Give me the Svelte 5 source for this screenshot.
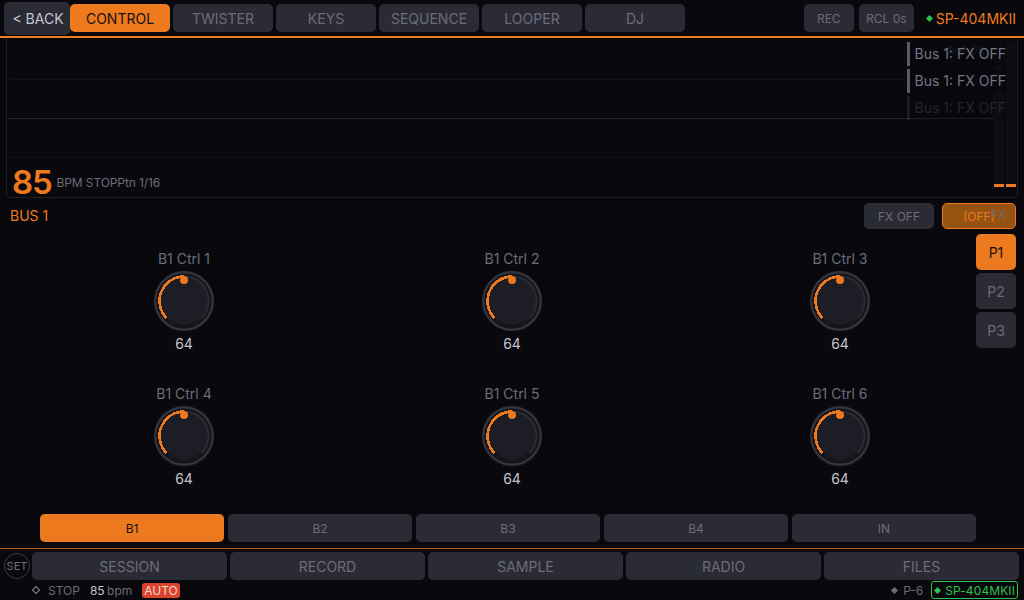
<script lang="ts">
  const tabs = ["CONTROL", "TWISTER", "KEYS", "SEQUENCE", "LOOPER", "DJ"];
  const knobs = [1, 2, 3, 4, 5, 6].map((n) => ({ label: `B1 Ctrl ${n}`, value: 64 }));
  const pages = ["P1", "P2", "P3"];
  const buses = ["B1", "B2", "B3", "B4", "IN"];
  const nav = ["SESSION", "RECORD", "SAMPLE", "RADIO", "FILES"];
  const toasts = [1, 1, 0.25];
</script>

<div class="screen">
  <header class="topbar">
    <button class="btn back">&lt; BACK</button>
    <div class="tabs">
      {#each tabs as tab, i}
        <button class="btn tab" class:on={i === 0}>{tab}</button>
      {/each}
    </div>
    <div class="top-right">
      <button class="btn small rec">REC</button>
      <button class="btn small rcl">RCL 0s</button>
      <span class="device"><i class="dot"></i>SP-404MKII</span>
    </div>
  </header>

  <section class="viz">
    <div class="grid-lines">
      <span></span>
      <span class="mid"></span>
      <span></span>
    </div>
    <div class="readout">
      <span class="bpm">85</span>
      <span class="meta">BPM STOP</span><span class="meta">Ptn 1/16</span>
    </div>
    <span class="buf">buf 0s</span>
    <div class="meters">
      <div class="meter"><b></b></div>
      <div class="meter"><b></b></div>
    </div>
    <div class="toasts">
      {#each toasts as alpha}
        <div class="toast" style="opacity: {alpha}">Bus 1: FX OFF</div>
      {/each}
    </div>
  </section>

  <section class="bus-head">
    <span class="bus-name">BUS 1</span>
    <div class="fx">
      <button class="btn fx-off">FX OFF</button>
      <button class="btn fx-state">(OFF)<span class="fx-tag">FX</span></button>
    </div>
  </section>

  <section class="body">
    <div class="knobs">
      {#each knobs as knob}
        <div class="knob">
          <span class="knob-label">{knob.label}</span>
          <svg width="60" height="60" viewBox="0 0 60 60">
            <circle cx="30" cy="30" r="28.8" fill="#15151b" stroke="#33333e" stroke-width="2.4" />
            <circle cx="30" cy="30" r="23.5" fill="#1d1d25" />
            <path d="M30 5.5A24.5 24.5 0 0 1 47.3 47.3" fill="none" stroke="#2b2b34" stroke-width="2" />
            <path d="M12.7 47.3A24.5 24.5 0 0 1 30 5.5" fill="none" stroke="#ee7a20" stroke-width="2.6" shape-rendering="crispEdges" />
            <circle cx="30" cy="9" r="4" fill="#ee7a20" />
          </svg>
          <span class="knob-value">{knob.value}</span>
        </div>
      {/each}
    </div>
    <div class="pages">
      {#each pages as page, i}
        <button class="btn page" class:on={i === 0}>{page}</button>
      {/each}
    </div>
  </section>

  <div class="bus-tabs">
    {#each buses as bus, i}
      <button class="btn bus" class:on={i === 0}>{bus}</button>
    {/each}
  </div>

  <nav class="nav">
    <span class="set">SET</span>
    {#each nav as item}
      <button class="btn nav-item">{item}</button>
    {/each}
  </nav>

  <footer class="status">
    <i class="diamond"></i>
    <span class="stop">STOP</span>
    <span class="tempo"><b>85</b> bpm</span>
    <span class="auto">AUTO</span>
    <span class="spacer"></span>
    <i class="port-dot"></i>
    <span class="port">P-6</span>
    <span class="link"><i></i>SP-404MKII</span>
  </footer>
</div>

<style>
  :global(body) {
    margin: 0;
    background: #08080d;
  }

  .screen {
    width: 1024px;
    height: 600px;
    overflow: hidden;
    display: flex;
    flex-direction: column;
    background: #08080d;
    color: #6c6c7a;
    font-family: Inter, "Liberation Sans", sans-serif;
  }

  .btn {
    border: 0;
    padding: 0;
    margin: 0;
    background: #2b2b36;
    color: #6c6c7a;
    font: inherit;
    border-radius: 5px;
  }

  .btn.on {
    background: #ee7a20;
    color: #17110c;
  }

  .topbar {
    height: 36px;
    flex: none;
    display: flex;
    align-items: center;
    padding-left: 4px;
    padding-right: 8px;
    border-bottom: 2px solid #ee7a20;
  }

  .back {
    width: 66px;
    height: 33px;
    padding-left: 2px;
    color: #c5c5cf;
    font-size: 14px;
  }

  .tabs {
    display: flex;
    gap: 3px;
  }

  .tab {
    width: 100px;
    height: 28px;
    font-size: 14px;
  }

  .top-right {
    margin-left: auto;
    display: flex;
    align-items: center;
    gap: 5px;
  }

  .small {
    height: 28px;
    font-size: 12px;
  }

  .rec {
    width: 50px;
  }

  .rcl {
    width: 55px;
  }

  .device {
    margin-left: 8px;
    display: flex;
    align-items: center;
    gap: 4px;
    color: #ee7a20;
    font-size: 14px;
  }

  .dot {
    width: 5px;
    height: 5px;
    background: #2ec24a;
    transform: rotate(45deg);
  }

  .viz {
    position: relative;
    flex: none;
    height: 159px;
    margin: 1px 6px 0;
    border: 1px solid #1e1e26;
    border-top: 0;
    border-radius: 0 0 4px 4px;
    box-sizing: border-box;
  }

  .grid-lines {
    position: absolute;
    left: 2px;
    right: 22px;
    top: 40px;
    display: flex;
    flex-direction: column;
    gap: 38px;
  }

  .grid-lines span {
    height: 1px;
    background: #101016;
  }

  .grid-lines span.mid {
    background: #24242c;
  }

  .readout {
    position: absolute;
    left: 5px;
    bottom: -5px;
    display: flex;
    align-items: center;
  }

  .bpm {
    color: #ee7a20;
    font-size: 33px;
    font-weight: 600;
    line-height: 40px;
    letter-spacing: -1.2px;
    margin-right: 5px;
  }

  .meta {
    font-size: 12px;
    letter-spacing: -0.1px;
  }

  .buf {
    position: absolute;
    right: 33px;
    top: 3px;
    font-size: 12px;
    color: #2f2f39;
  }

  .meters {
    position: absolute;
    right: 1px;
    top: 4px;
    bottom: 10px;
    display: flex;
    gap: 2px;
  }

  .meter {
    position: relative;
    width: 10px;
    background-color: #0d0d13;
    background-image: radial-gradient(#24242c 0.6px, transparent 0.7px);
    background-size: 4px 4px;
  }

  .meter b {
    position: absolute;
    left: 0;
    right: 0;
    bottom: 0;
    height: 3px;
    background: #ee7a20;
  }

  .toasts {
    position: absolute;
    top: 3px;
    right: 11px;
    display: flex;
    flex-direction: column;
    gap: 3px;
  }

  .toast {
    height: 24px;
    line-height: 24px;
    padding-left: 5px;
    border-left: 3px solid #5a5a68;
    background: rgba(8, 8, 13, 0.55);
    color: #757584;
    font-size: 14px;
  }

  .bus-head {
    flex: none;
    height: 36px;
    display: flex;
    align-items: center;
    justify-content: space-between;
    padding: 0 8px 0 10px;
    box-sizing: border-box;
  }

  .bus-name {
    margin-top: -2px;
    color: #ee7a20;
    font-size: 14px;
  }

  .fx {
    display: flex;
    gap: 8px;
  }

  .fx-off {
    width: 70px;
    height: 26px;
    font-size: 12px;
  }

  .fx-state {
    position: relative;
    width: 74px;
    height: 26px;
    background: #955210;
    border: 1px solid #ee7a20;
    box-sizing: border-box;
    color: #ee7a20;
    font-size: 12px;
  }

  .fx-tag {
    position: absolute;
    right: 9px;
    top: 3px;
    color: #6c6c7a;
    font-size: 12px;
  }

  .body {
    flex: none;
    height: 280px;
    position: relative;
  }

  .knobs {
    display: grid;
    grid-template-columns: repeat(3, 328px);
    grid-auto-rows: 135px;
    padding: 16px 0 0 20px;
  }

  .knob {
    display: flex;
    flex-direction: column;
    align-items: center;
  }

  .knob-label {
    font-size: 14px;
    line-height: 17px;
    margin-bottom: 4px;
  }

  .knob svg {
    display: block;
  }

  .knob-value {
    margin-top: 4px;
    color: #c5c5cf;
    font-size: 14px;
    line-height: 17px;
  }

  .pages {
    position: absolute;
    right: 8px;
    top: 0;
    display: flex;
    flex-direction: column;
    gap: 3px;
  }

  .page {
    width: 40px;
    height: 36px;
    font-size: 14px;
  }

  .bus-tabs {
    flex: none;
    display: flex;
    gap: 4px;
    padding: 0 48px 0 40px;
    height: 34px;
    border-bottom: 1px solid #b35f18;
  }

  .bus {
    flex: 1;
    height: 28px;
    font-size: 12px;
  }

  .nav {
    flex: none;
    display: flex;
    align-items: center;
    gap: 3px;
    height: 28px;
    margin-top: 3px;
    padding: 0 5px 0 4px;
  }

  .set {
    flex: none;
    width: 26px;
    height: 26px;
    margin-right: -1px;
    border: 1px solid #3a3a45;
    border-radius: 50%;
    box-sizing: border-box;
    display: flex;
    align-items: center;
    justify-content: center;
    font-size: 11px;
  }

  .nav-item {
    flex: 1;
    height: 28px;
    font-size: 14px;
  }

  .status {
    flex: 1;
    display: flex;
    align-items: center;
    padding: 0 6px 0 33px;
    font-size: 12px;
  }

  .diamond {
    width: 4px;
    height: 4px;
    border: 1px solid #8a8a96;
    transform: rotate(45deg);
    margin-right: 9px;
  }

  .tempo {
    margin-left: 10px;
    word-spacing: -1px;
  }

  .tempo b {
    font-weight: 400;
    color: #c5c5cf;
  }

  .auto {
    margin-left: 10px;
    padding: 0 2px;
    background: #d9432f;
    color: #f4d9c8;
    border-radius: 3px;
  }

  .spacer {
    flex: 1;
  }

  .port-dot {
    width: 5px;
    height: 5px;
    background: #6c6c7a;
    transform: rotate(45deg);
    margin-right: 6px;
  }

  .link {
    margin-left: 8px;
    display: flex;
    align-items: center;
    gap: 5px;
    padding: 0 2px 0 3px;
    height: 16px;
    border: 1px solid #2ec24a;
    border-radius: 3px;
    color: #2ec24a;
    letter-spacing: 0.1px;
  }

  .link i {
    width: 5px;
    height: 5px;
    background: #2ec24a;
    transform: rotate(45deg);
  }
</style>
